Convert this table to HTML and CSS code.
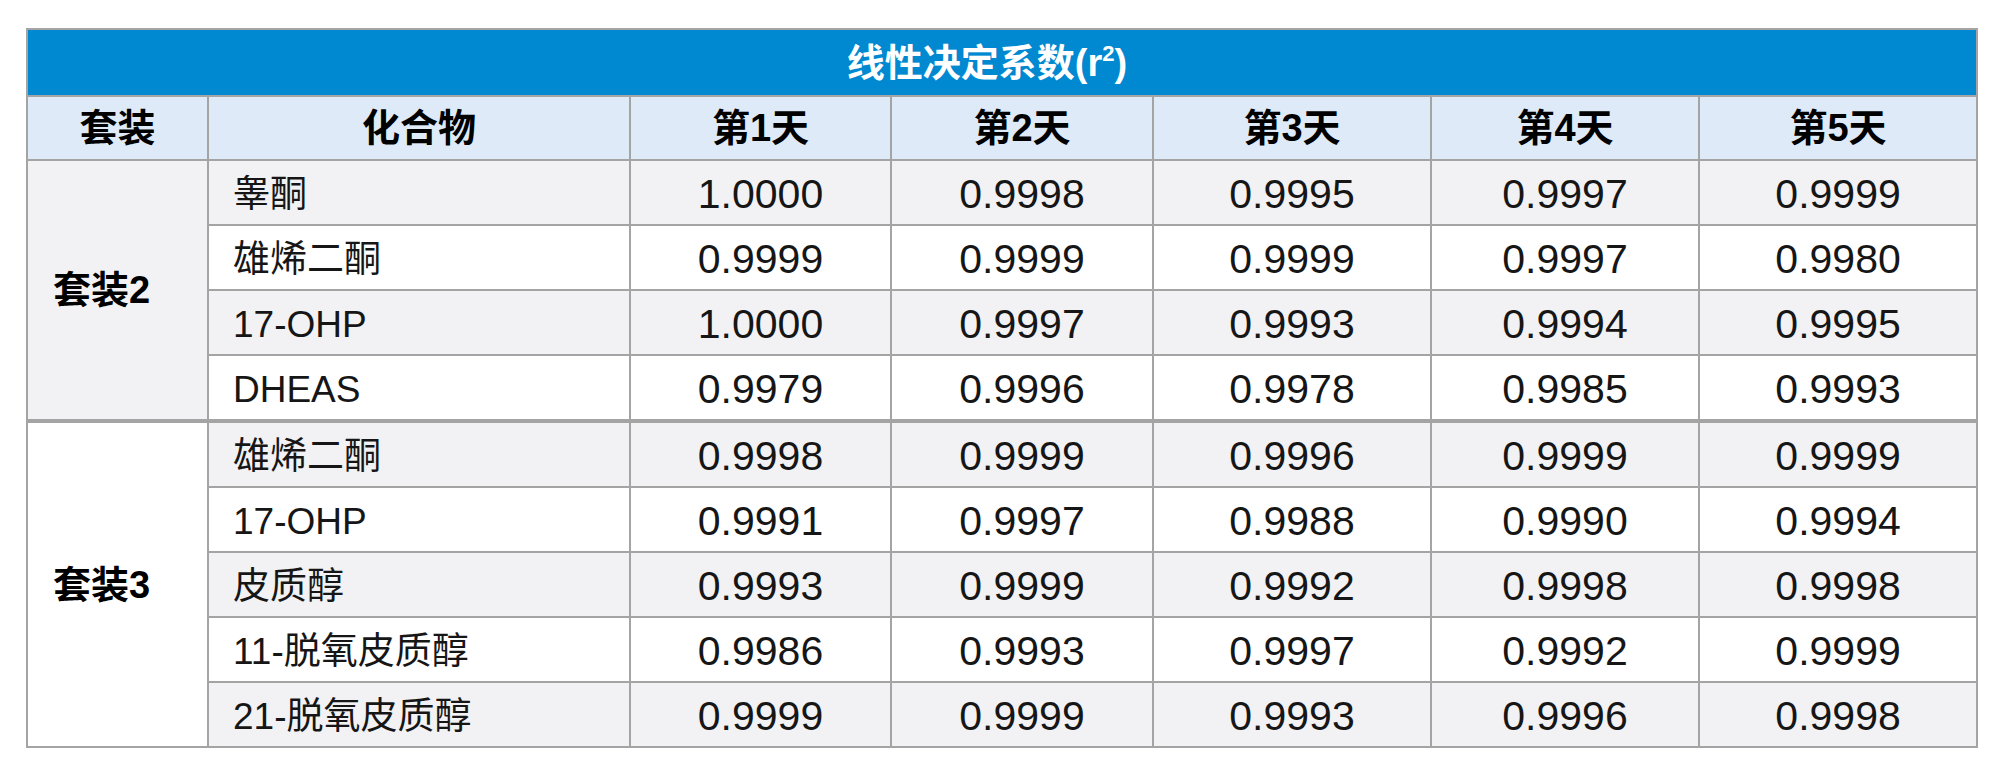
FILE: index.html
```html
<!DOCTYPE html>
<html lang="zh-CN">
<head>
<meta charset="utf-8">
<title>线性决定系数</title>
<link rel="stylesheet" href="styles.css">
</head>
<body>
<table class="data">
  <colgroup>
    <col class="c-kit">
    <col class="c-name">
    <col class="c-d1">
    <col class="c-d2">
    <col class="c-d3">
    <col class="c-d4">
    <col class="c-d5">
  </colgroup>
  <thead>
    <tr class="title-row"><th colspan="7">线性决定系数(r<sup>2</sup>)</th></tr>
    <tr class="head-row">
      <th>套装</th><th>化合物</th><th>第1天</th><th>第2天</th><th>第3天</th><th>第4天</th><th>第5天</th>
    </tr>
  </thead>
  <tbody class="kit kit-a">
    <tr class="odd"><th rowspan="4" class="kit-cell">套装2</th><td class="name">睾酮</td><td>1.0000</td><td>0.9998</td><td>0.9995</td><td>0.9997</td><td>0.9999</td></tr>
    <tr class="even"><td class="name">雄烯二酮</td><td>0.9999</td><td>0.9999</td><td>0.9999</td><td>0.9997</td><td>0.9980</td></tr>
    <tr class="odd"><td class="name">17-OHP</td><td>1.0000</td><td>0.9997</td><td>0.9993</td><td>0.9994</td><td>0.9995</td></tr>
    <tr class="even"><td class="name">DHEAS</td><td>0.9979</td><td>0.9996</td><td>0.9978</td><td>0.9985</td><td>0.9993</td></tr>
  </tbody>
  <tbody class="kit kit-b">
    <tr class="odd first"><th rowspan="5" class="kit-cell">套装3</th><td class="name">雄烯二酮</td><td>0.9998</td><td>0.9999</td><td>0.9996</td><td>0.9999</td><td>0.9999</td></tr>
    <tr class="even"><td class="name">17-OHP</td><td>0.9991</td><td>0.9997</td><td>0.9988</td><td>0.9990</td><td>0.9994</td></tr>
    <tr class="odd"><td class="name">皮质醇</td><td>0.9993</td><td>0.9999</td><td>0.9992</td><td>0.9998</td><td>0.9998</td></tr>
    <tr class="even"><td class="name">11-脱氧皮质醇</td><td>0.9986</td><td>0.9993</td><td>0.9997</td><td>0.9992</td><td>0.9999</td></tr>
    <tr class="odd"><td class="name">21-脱氧皮质醇</td><td>0.9999</td><td>0.9999</td><td>0.9993</td><td>0.9996</td><td>0.9998</td></tr>
  </tbody>
</table>
</body>
</html>
```

FILE: styles.css
```css
html, body {
  margin: 0;
  padding: 0;
  background: #ffffff;
}

body {
  padding: 28px 0 0 26px;
  font-family: "Liberation Sans", "Noto Sans CJK SC", Arial, sans-serif;
  color: #111111;
}

.data {
  border-collapse: collapse;
  table-layout: fixed;
  width: 1950px;
  border: 2px solid #a4a4a4;
}

.c-kit { width: 181px; }
.c-name { width: 422px; }
.c-d1 { width: 261px; }
.c-d2 { width: 262px; }
.c-d3 { width: 278px; }
.c-d4 { width: 268px; }
.c-d5 { width: 278px; }

.data th,
.data td {
  border: 2px solid #a4a4a4;
  height: 63px;
  padding: 0;
  text-align: center;
  vertical-align: middle;
  line-height: 1;
}

.title-row th {
  background: #0088d0;
  color: #ffffff;
  font-size: 38px;
  font-weight: 700;
  height: 65px;
  padding-right: 30px;
}

.title-row sup {
  font-size: 22px;
  vertical-align: 15px;
  line-height: 0;
}

.head-row th {
  background: #deeaf7;
  color: #000000;
  font-size: 38px;
  font-weight: 700;
  height: 62px;
}

.data td {
  font-size: 41px;
  font-weight: 400;
  color: #161616;
  padding-top: 3px;
  height: 60px;
}

.data td.name {
  text-align: left;
  padding-left: 24px;
  font-size: 37px;
}

.odd td {
  background: #f2f2f4;
}

.even td {
  background: #ffffff;
}

.data .kit-cell {
  font-size: 38px;
  font-weight: 700;
  color: #000000;
  text-align: left;
  padding-left: 25px;
}

.kit-a .kit-cell {
  background: #f2f2f4;
}

.kit-b .kit-cell {
  background: #ffffff;
}

.kit-b tr.first th,
.kit-b tr.first td {
  border-top: 4px solid #a4a4a4;
}
```
